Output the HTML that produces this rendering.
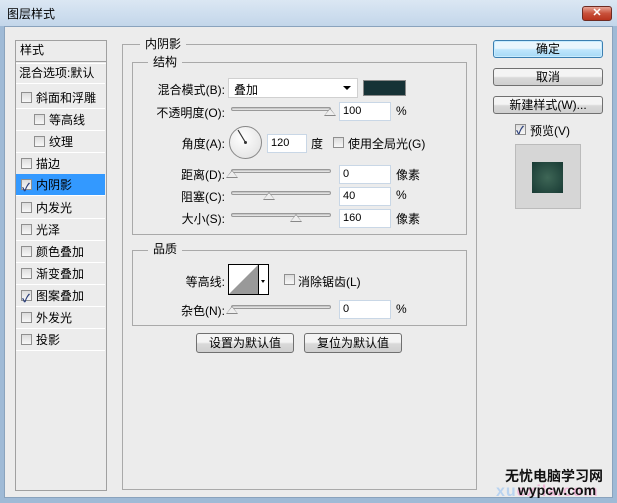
<!DOCTYPE html>
<html><head><meta charset="utf-8"><style>
*{margin:0;padding:0;box-sizing:border-box}
body{width:617px;height:503px;overflow:hidden;background:#9fbad6;font-family:"Liberation Sans","Noto Sans CJK SC",sans-serif;font-size:12px;color:#000;position:relative}
.a{position:absolute;white-space:nowrap}
#title{left:0;top:0;width:617px;height:26px;background:linear-gradient(#dbe7f3,#c3d6ea)}
#body{left:4px;top:26px;width:609px;height:472px;background:#ececec;border:1px solid #8aa3bd}
.box{position:absolute;border:1px solid #a9a9a9}
.lbl{position:absolute;background:#ececec;padding:0 5px;line-height:14px}
.cb{position:absolute;width:11px;height:11px;border:1px solid #8f8f8f;background:linear-gradient(#dcdcdc,#f8f8f8)}
.cb.on::after{content:"✓";position:absolute;left:0;top:-3px;font-size:11px;color:#2b3f7a;font-weight:bold}
.item{position:absolute;left:16px;width:89px;height:22px;line-height:22px;border-bottom:1px solid #fff}
.inp{position:absolute;background:#fff;border:1px solid #c9d7e6;height:19px;line-height:17px;padding-left:3px;font-size:11px}
.sl{position:absolute;height:4px;border:1px solid #999;border-radius:2px;background:linear-gradient(#bbb,#eee)}
.th{position:absolute;width:0;height:0;border-left:6px solid transparent;border-right:6px solid transparent;border-bottom:8px solid #888}
.th::after{content:"";position:absolute;left:-5px;top:1px;border-left:5px solid transparent;border-right:5px solid transparent;border-bottom:6px solid #eee}
.btn{position:absolute;border:1px solid #707070;border-radius:3px;background:linear-gradient(#f4f4f4 45%,#d9d9d9 55%,#cfcfcf);text-align:center;line-height:16px}
.r{text-align:right}
</style></head><body>
<div class="a" id="title"></div>
<div class="a" style="left:7px;top:5px;font-size:12px">图层样式</div>
<div class="a" style="left:582px;top:6px;width:30px;height:15px;border:1px solid #6d2b22;border-radius:3px;background:linear-gradient(#e8a496,#c8503a 50%,#b8341e);color:#fff;text-align:center;font-size:11px;line-height:13px;font-weight:bold">✕</div>
<div class="a" id="body"></div>

<div class="a" style="left:15px;top:40px;width:92px;height:451px;background:#ececec;border:1px solid #a0a0a0"></div>
<div class="a" style="left:20px;top:41px">样式</div>
<div class="a" style="left:16px;top:61px;width:90px;border-top:1px solid #a0a0a0;border-bottom:1px solid #fff;height:3px"></div>
<div class="item" style="top:62px;padding-left:3px">混合选项:默认</div>
<div class="item" style="top:87px"><span class="cb" style="left:5px;top:5px"></span><span style="position:absolute;left:20px">斜面和浮雕</span></div>
<div class="item" style="top:109px"><span class="cb" style="left:18px;top:5px"></span><span style="position:absolute;left:33px">等高线</span></div>
<div class="item" style="top:131px"><span class="cb" style="left:18px;top:5px"></span><span style="position:absolute;left:33px">纹理</span></div>
<div class="item" style="top:153px"><span class="cb" style="left:5px;top:5px"></span><span style="position:absolute;left:20px">描边</span></div>
<div class="item" style="top:174px;background:#3399ff"><span class="cb on" style="left:5px;top:5px"></span><span style="position:absolute;left:20px">内阴影</span></div>
<div class="item" style="top:197px"><span class="cb" style="left:5px;top:5px"></span><span style="position:absolute;left:20px">内发光</span></div>
<div class="item" style="top:219px"><span class="cb" style="left:5px;top:5px"></span><span style="position:absolute;left:20px">光泽</span></div>
<div class="item" style="top:241px"><span class="cb" style="left:5px;top:5px"></span><span style="position:absolute;left:20px">颜色叠加</span></div>
<div class="item" style="top:263px"><span class="cb" style="left:5px;top:5px"></span><span style="position:absolute;left:20px">渐变叠加</span></div>
<div class="item" style="top:285px"><span class="cb on" style="left:5px;top:5px"></span><span style="position:absolute;left:20px">图案叠加</span></div>
<div class="item" style="top:307px"><span class="cb" style="left:5px;top:5px"></span><span style="position:absolute;left:20px">外发光</span></div>
<div class="item" style="top:329px"><span class="cb" style="left:5px;top:5px"></span><span style="position:absolute;left:20px">投影</span></div>

<div class="box" style="left:122px;top:44px;width:355px;height:446px"></div>
<div class="lbl" style="left:140px;top:37px">内阴影</div>
<div class="box" style="left:132px;top:62px;width:335px;height:173px"></div>
<div class="lbl" style="left:148px;top:55px">结构</div>

<div class="a r" style="left:130px;width:95px;top:81px">混合模式(B):</div>
<div class="a" style="left:228px;top:78px;width:130px;height:20px;background:#fff;border:1px solid #d0d0d0;padding:2px 5px">叠加<span style="position:absolute;right:6px;top:7px;border-left:4px solid transparent;border-right:4px solid transparent;border-top:4px solid #000"></span></div>
<div class="a" style="left:363px;top:80px;width:43px;height:16px;background:#163236;border:1px solid #888"></div>

<div class="a r" style="left:130px;width:95px;top:104px">不透明度(O):</div>
<div class="sl" style="left:231px;top:107px;width:100px"></div><div class="th" style="left:324px;top:108px"></div>
<div class="inp" style="left:339px;top:102px;width:52px">100</div><div class="a" style="left:396px;top:104px">%</div>

<div class="a r" style="left:130px;width:95px;top:135px">角度(A):</div>
<div class="a" style="left:229px;top:126px;width:33px;height:33px;border-radius:50%;border:1px solid #888;background:radial-gradient(circle at 40% 35%,#fff,#ddd)"></div>
<svg class="a" style="left:229px;top:126px" width="33" height="33"><line x1="16.5" y1="16.5" x2="9" y2="4" stroke="#333" stroke-width="1.2"/><circle cx="16.5" cy="16.5" r="1.5" fill="#333"/></svg>
<div class="inp" style="left:267px;top:134px;width:40px">120</div>
<div class="a" style="left:311px;top:135px">度</div>
<span class="cb" style="left:333px;top:137px"></span><div class="a" style="left:348px;top:135px">使用全局光(G)</div>

<div class="a r" style="left:130px;width:95px;top:166px">距离(D):</div>
<div class="sl" style="left:231px;top:169px;width:100px"></div><div class="th" style="left:226px;top:170px"></div>
<div class="inp" style="left:339px;top:165px;width:52px">0</div><div class="a" style="left:396px;top:166px">像素</div>

<div class="a r" style="left:130px;width:95px;top:188px">阻塞(C):</div>
<div class="sl" style="left:231px;top:191px;width:100px"></div><div class="th" style="left:263px;top:192px"></div>
<div class="inp" style="left:339px;top:187px;width:52px">40</div><div class="a" style="left:396px;top:188px">%</div>

<div class="a r" style="left:130px;width:95px;top:210px">大小(S):</div>
<div class="sl" style="left:231px;top:213px;width:100px"></div><div class="th" style="left:290px;top:214px"></div>
<div class="inp" style="left:339px;top:209px;width:52px">160</div><div class="a" style="left:396px;top:210px">像素</div>

<div class="box" style="left:132px;top:250px;width:335px;height:76px"></div>
<div class="lbl" style="left:148px;top:242px">品质</div>
<div class="a r" style="left:130px;width:95px;top:273px">等高线:</div>
<div class="a" style="left:228px;top:264px;width:41px;height:31px;border:1px solid #000;background:#fff"></div>
<svg class="a" style="left:229px;top:265px" width="30" height="29"><polygon points="0,29 29,0 29,29" fill="#999"/></svg>
<div class="a" style="left:258px;top:265px;width:1px;height:29px;background:#000"></div>
<div class="a" style="left:261px;top:280px;border-left:2px solid transparent;border-right:2px solid transparent;border-top:3px solid #000"></div>
<span class="cb" style="left:284px;top:274px"></span><div class="a" style="left:298px;top:273px">消除锯齿(L)</div>
<div class="a r" style="left:130px;width:95px;top:302px">杂色(N):</div>
<div class="sl" style="left:231px;top:305px;width:100px"></div><div class="th" style="left:226px;top:306px"></div>
<div class="inp" style="left:339px;top:300px;width:52px">0</div><div class="a" style="left:396px;top:302px">%</div>

<div class="btn" style="left:196px;top:333px;width:98px;height:20px;line-height:18px">设置为默认值</div>
<div class="btn" style="left:304px;top:333px;width:98px;height:20px;line-height:18px">复位为默认值</div>

<div class="btn" style="left:493px;top:40px;width:110px;height:18px;border-color:#3c7fb1;background:linear-gradient(#eaf6fd 45%,#bee6fd 55%,#a7d9f5);box-shadow:inset 0 0 0 1px #c8ecff">确定</div>
<div class="btn" style="left:493px;top:68px;width:110px;height:18px">取消</div>
<div class="btn" style="left:493px;top:96px;width:110px;height:18px">新建样式(W)...</div>
<span class="cb on" style="left:515px;top:124px"></span><div class="a" style="left:530px;top:122px">预览(V)</div>
<div class="a" style="left:515px;top:144px;width:66px;height:65px;background:#d6d6d6;border:1px solid #bbb"></div>
<div class="a" style="left:532px;top:162px;width:31px;height:31px;background:radial-gradient(#3e6656,#183a34)"></div>

<div class="a" style="left:505px;top:466px;font-size:14px;font-weight:bold;color:#111">无忧电脑学习网</div>
<div class="a" style="left:496px;top:483px;font-size:16px;font-weight:bold;color:#b9d3f0;letter-spacing:1px">xu<span style="color:#f0b8d8">exila.com</span></div>
<div class="a" style="left:518px;top:482px;font-size:14px;font-weight:bold;color:#111">wypcw.com</div>
</body></html>
